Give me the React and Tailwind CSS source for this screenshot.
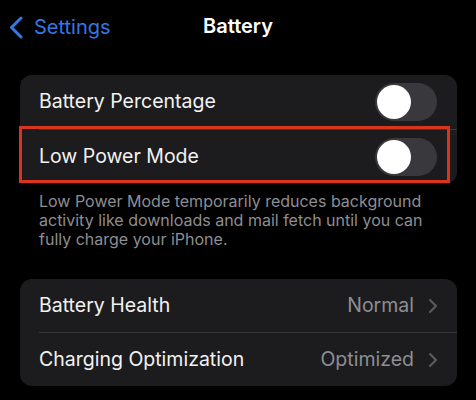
function Toggle() {
  return (
    <div className="w-[62px] h-[38px] rounded-full bg-[#39393d] p-[2px] flex items-center">
      <div className="w-[34px] h-[34px] rounded-full bg-white" />
    </div>
  );
}

function ToggleRow({ label }) {
  return (
    <div className="h-[54px] flex items-center justify-between pl-[19px] pr-[20px]">
      <span className="text-[19.5px] text-[#f2f2f2]">{label}</span>
      <Toggle />
    </div>
  );
}

function Chevron({ className }) {
  return (
    <svg viewBox="0 0 10 16" className={className} fill="none" stroke="currentColor" strokeWidth="2" strokeLinecap="round" strokeLinejoin="round">
      <polyline points="2,2 8,8 2,14" />
    </svg>
  );
}

function LinkRow({ label, value }) {
  return (
    <div className="h-[53px] flex items-center justify-between pl-[19px] pr-[19px]">
      <span className="text-[19.5px] text-[#f2f2f2]">{label}</span>
      <div className="flex items-center gap-[14px]">
        <span className="text-[19.5px] text-[#8e8e93]">{value}</span>
        <Chevron className="w-[10px] h-[16px] text-[#5c5c60]" />
      </div>
    </div>
  );
}

export default function App() {
  return (
    <div className="w-[476px] h-[400px] bg-black font-['Inter',sans-serif] overflow-hidden">
      <div className="relative h-[75px]">
        <div className="absolute left-[9px] top-[12px] flex items-center gap-[11px] text-[#3478e6]">
          <svg viewBox="0 0 14 23" className="w-[14px] h-[23px]" fill="none" stroke="currentColor" strokeWidth="3" strokeLinecap="round" strokeLinejoin="round">
            <polyline points="12,2 2.5,11.5 12,21" />
          </svg>
          <span className="text-[20px]">Settings</span>
        </div>
        <div className="absolute left-0 right-0 top-[11px] text-center text-[20px] font-semibold text-white">
          Battery
        </div>
      </div>

      <div className="relative ml-[20px] mr-[19px] rounded-[12px] bg-[#1c1c1e]">
        <ToggleRow label="Battery Percentage" />
        <div className="ml-[19px] h-px bg-[#38383a]" />
        <ToggleRow label="Low Power Mode" />
        <div className="absolute left-[-1px] top-[51px] w-[431px] h-[57px] border-[3px] border-[#d9341c]" />
      </div>

      <p className="pl-[39px] pr-[40px] pt-[8px] text-[16px] leading-[19px] text-[#8e8e93]">
        Low Power Mode temporarily reduces background activity like downloads and mail fetch until you can fully charge your iPhone.
      </p>

      <div className="mt-[30px] ml-[20px] mr-[19px] rounded-[12px] bg-[#1c1c1e]">
        <LinkRow label="Battery Health" value="Normal" />
        <div className="ml-[19px] h-px bg-[#38383a]" />
        <LinkRow label="Charging Optimization" value="Optimized" />
      </div>
    </div>
  );
}
